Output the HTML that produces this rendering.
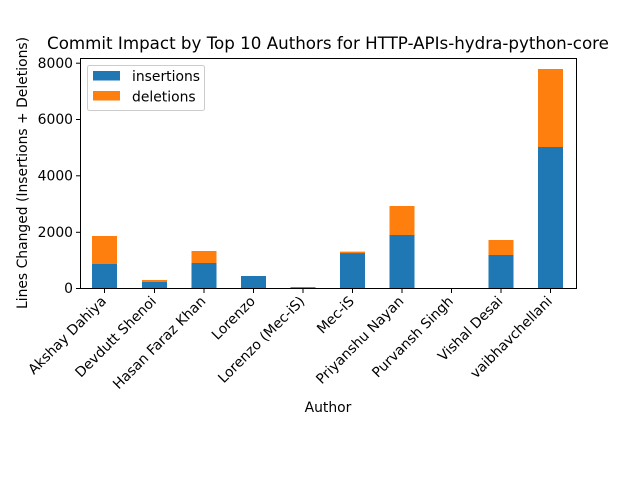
<!DOCTYPE html>
<html><head><style>html,body{margin:0;padding:0;background:#fff}svg{display:block}</style></head><body>
<svg width="640" height="480" xmlns="http://www.w3.org/2000/svg" font-family="DejaVu Sans, Liberation Sans, sans-serif">
<rect width="640" height="480" fill="#fff"/>
<g id="bars">
<rect x="92" y="264" width="25" height="24" fill="#1f77b4"/><rect x="92" y="236" width="25" height="28" fill="#ff7f0e"/>
<rect x="142" y="282" width="25" height="6" fill="#1f77b4"/><rect x="142" y="280" width="25" height="2" fill="#ff7f0e"/>
<rect x="191.5" y="263" width="25" height="25" fill="#1f77b4"/><rect x="191.5" y="251" width="25" height="12" fill="#ff7f0e"/>
<rect x="241" y="276" width="25" height="12" fill="#1f77b4"/>
<rect x="290.5" y="287.3" width="25" height="0.7" fill="#1f77b4"/><rect x="290.5" y="287" width="25" height="0.4" fill="#ff7f0e"/>
<rect x="340" y="253" width="25" height="35" fill="#1f77b4"/><rect x="340" y="251.6" width="25" height="1.6" fill="#ff7f0e"/>
<rect x="389.5" y="235" width="25" height="53" fill="#1f77b4"/><rect x="389.5" y="206" width="25" height="29" fill="#ff7f0e"/>
<rect x="488.5" y="255" width="25" height="33" fill="#1f77b4"/><rect x="488.5" y="240" width="25" height="15" fill="#ff7f0e"/>
<rect x="538" y="147" width="25" height="141" fill="#1f77b4"/><rect x="538" y="69" width="25" height="78" fill="#ff7f0e"/>
</g>
<rect x="80.5" y="58.5" width="496" height="230" fill="none" stroke="#000" stroke-width="1"/>
<g stroke="#000" stroke-width="1">
<line x1="76" y1="288.5" x2="80" y2="288.5"/><line x1="76" y1="232.3" x2="80" y2="232.3"/><line x1="76" y1="175.8" x2="80" y2="175.8"/><line x1="76" y1="119.5" x2="80" y2="119.5"/><line x1="76" y1="63.2" x2="80" y2="63.2"/>
<line x1="104.5" y1="289" x2="104.5" y2="293"/><line x1="154.5" y1="289" x2="154.5" y2="293"/><line x1="204" y1="289" x2="204" y2="293"/><line x1="253.5" y1="289" x2="253.5" y2="293"/><line x1="303" y1="289" x2="303" y2="293"/><line x1="352.5" y1="289" x2="352.5" y2="293"/><line x1="402" y1="289" x2="402" y2="293"/><line x1="451.5" y1="289" x2="451.5" y2="293"/><line x1="501" y1="289" x2="501" y2="293"/><line x1="550.5" y1="289" x2="550.5" y2="293"/>
</g>
<g font-size="13.9" text-anchor="end" fill="#000">
<text x="73" y="293">0</text><text x="73" y="237">2000</text><text x="73" y="180.5">4000</text><text x="73" y="124">6000</text><text x="73" y="68">8000</text>
</g>
<g font-size="13.9" text-anchor="end" fill="#000">
<text transform="translate(107,302) rotate(-45)">Akshay Dahiya</text>
<text transform="translate(157,302) rotate(-45)">Devdutt Shenoi</text>
<text transform="translate(206.5,302) rotate(-45)">Hasan Faraz Khan</text>
<text transform="translate(256,302) rotate(-45)">Lorenzo</text>
<text transform="translate(305.5,302) rotate(-45)">Lorenzo (Mec-iS)</text>
<text transform="translate(355,302) rotate(-45)">Mec-iS</text>
<text transform="translate(404.5,302) rotate(-45)">Priyanshu Nayan</text>
<text transform="translate(454,302) rotate(-45)">Purvansh Singh</text>
<text transform="translate(503.5,302) rotate(-45)">Vishal Desai</text>
<text transform="translate(553,302) rotate(-45)">vaibhavchellani</text>
</g>
<text x="328" y="412" font-size="13.9" text-anchor="middle">Author</text>
<text transform="translate(27,173) rotate(-90)" font-size="13.9" text-anchor="middle">Lines Changed (Insertions + Deletions)</text>
<text x="328" y="49" font-size="16.7" text-anchor="middle">Commit Impact by Top 10 Authors for HTTP-APIs-hydra-python-core</text>
<rect x="87.5" y="65.5" width="117" height="45" rx="2" fill="#fff" fill-opacity="0.8" stroke="#ccc"/>
<rect x="93" y="71" width="27" height="9.5" fill="#1f77b4"/>
<rect x="93" y="91" width="27" height="9.5" fill="#ff7f0e"/>
<text x="132" y="81" font-size="13.9">insertions</text>
<text x="132" y="101.5" font-size="13.9">deletions</text>
</svg>
</body></html>
